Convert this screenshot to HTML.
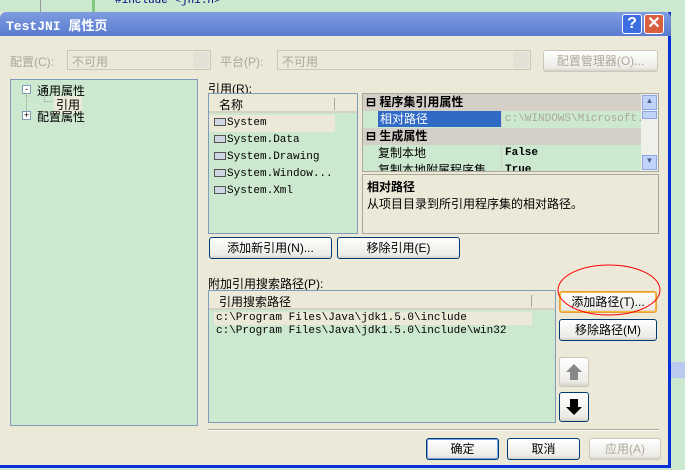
<!DOCTYPE html>
<html><head><meta charset="utf-8"><style>
*{margin:0;padding:0;box-sizing:border-box}
body{width:685px;height:470px;background:#cce8cf;position:relative;overflow:hidden;font-family:"Liberation Sans","Noto Sans CJK SC",sans-serif;font-size:12px;color:#000}
.a{position:absolute}
.dlg{left:0;top:12px;width:671px;height:456px;background:#ece9d8;border:3px solid #0831d9;border-top:none;border-left:none}
.title{left:0;top:12px;width:671px;height:24px;background:linear-gradient(#7f9ddf,#6c8bd8 50%,#5a7bd0);color:#fff;font-weight:bold;font-size:13px;padding:3px 0 0 6px;font-family:"Liberation Mono","Noto Sans CJK SC",monospace;border-radius:6px 6px 0 0}
.tb{top:14px;width:20px;height:20px;border:1px solid #fff;border-radius:3px;color:#fff;font-weight:bold;text-align:center;font-size:16px;line-height:18px}
.combo{height:20px;border:1px solid #c9c7ba;background:#ece9d8;color:#aca899;padding:2px 4px}
.combo:after{content:"";position:absolute;right:1px;top:1px;width:16px;height:16px;background:#e3e1d6}
.dis{color:#aca899}
.box{background:#cce8cf;border:1px solid #7f9db9}
.btn{height:22px;border:1px solid #003c74;border-radius:3px;background:linear-gradient(#fff,#ecebe6 85%,#d6d0c5);text-align:center;line-height:20px}
.mono{font-family:"Liberation Mono","Noto Sans CJK SC",monospace;font-size:11px}
.ref{left:4px;height:17px;line-height:17px}
.ic{display:inline-block;width:12px;height:8px;border:1px solid #555;background:#cfd6e4;vertical-align:-1px;margin-right:1px;margin-left:5px}
</style></head><body>
<div class="a" style="left:40px;top:0;width:55px;height:12px;border-left:1px solid #999;border-right:3px solid #7ec97e"></div>
<div class="a mono" style="left:115px;top:-5px;color:#000080">#include &lt;jni.h&gt;</div>
<div class="a dlg"></div>
<div class="a title">TestJNI 属性页</div>
<div class="a tb" style="left:622px;background:#3c6ee0">?</div>
<div class="a tb" style="left:644px;background:#d8603e">✕</div>
<div class="a" style="left:671px;top:362px;width:14px;height:16px;background:#b9c9ef"></div>

<div class="a dis" style="left:10px;top:53px">配置(C):</div>
<div class="a combo" style="left:67px;top:50px;width:144px">不可用</div>
<div class="a dis" style="left:220px;top:53px">平台(P):</div>
<div class="a combo" style="left:277px;top:50px;width:254px">不可用</div>
<div class="a btn dis" style="left:543px;top:50px;width:115px;border-color:#c9c7ba">配置管理器(O)...</div>

<div class="a box" style="left:10px;top:79px;width:188px;height:347px"></div>
<div class="a" style="left:22px;top:85px;width:9px;height:9px;border:1px solid #7f9db9;background:#fff;font-size:9px;line-height:6px;text-align:center">-</div>
<div class="a" style="left:37px;top:82px">通用属性</div>
<div class="a" style="left:54px;top:96px;background:#ece9d8;padding:0 2px">引用</div>
<div class="a" style="left:26px;top:95px;height:22px;border-left:1px dotted #999"></div>
<div class="a" style="left:44px;top:95px;width:8px;height:7px;border-left:1px dotted #999;border-bottom:1px dotted #999"></div>
<div class="a" style="left:22px;top:111px;width:9px;height:9px;border:1px solid #7f9db9;background:#fff;font-size:9px;line-height:7px;text-align:center">+</div>
<div class="a" style="left:37px;top:108px">配置属性</div>

<div class="a" style="left:208px;top:80px">引用(R):</div>
<div class="a box" style="left:208px;top:93px;width:150px;height:141px"></div>
<div class="a" style="left:209px;top:94px;width:148px;height:19px;background:#ece9d8;border-bottom:2px solid #d6d2c2;padding:2px 0 0 10px">名称</div>
<div class="a" style="left:334px;top:98px;height:12px;border-left:1px solid #aca899"></div>
<div class="a mono" style="left:209px;top:115px;width:140px">
<div class="ref a" style="top:0;left:0;width:126px;background:#ece9d8"><span class="ic"></span>System</div>
<div class="ref a" style="top:17px;left:0"><span class="ic"></span>System.Data</div>
<div class="ref a" style="top:34px;left:0"><span class="ic"></span>System.Drawing</div>
<div class="ref a" style="top:51px;left:0;white-space:nowrap"><span class="ic"></span>System.Window...</div>
<div class="ref a" style="top:68px;left:0"><span class="ic"></span>System.Xml</div>
</div>

<div class="a" style="left:362px;top:93px;width:297px;height:79px;border:1px solid #aca899;background:#cce8cf"></div>
<div class="a" style="left:363px;top:94px;width:278px;height:17px;background:#d4d0c8;font-weight:bold;padding:0 0 0 3px;line-height:17px">⊟ 程序集引用属性</div>
<div class="a" style="left:378px;top:111px;width:123px;height:16px;background:#316ac5;color:#fff;padding-left:2px;line-height:16px">相对路径</div>
<div class="a mono" style="left:505px;top:111px;color:#aca899;line-height:16px;width:136px;overflow:hidden;white-space:nowrap">c:\WINDOWS\Microsoft.NET</div>
<div class="a" style="left:363px;top:128px;width:278px;height:17px;background:#d4d0c8;font-weight:bold;padding-left:3px;line-height:17px">⊟ 生成属性</div>
<div class="a" style="left:378px;top:145px;line-height:17px">复制本地</div>
<div class="a mono" style="left:505px;top:145px;line-height:17px;font-weight:bold">False</div>
<div class="a" style="left:378px;top:162px;height:9px;overflow:hidden;line-height:17px;width:260px">复制本地附属程序集<span class="mono" style="position:absolute;left:127px;font-weight:bold">True</span></div>
<div class="a" style="left:501px;top:111px;height:60px;border-left:1px solid #d4d0c8"></div>
<div class="a" style="left:641px;top:94px;width:17px;height:77px;background:#f0f0ea"></div>
<div class="a" style="left:642px;top:95px;width:15px;height:15px;background:#c1d3fb;border:1px solid #8aa5e0;font-size:8px;text-align:center;color:#4d6185">▲</div>
<div class="a" style="left:642px;top:111px;width:15px;height:8px;background:#c1d3fb;border:1px solid #8aa5e0"></div>
<div class="a" style="left:642px;top:155px;width:15px;height:15px;background:#c1d3fb;border:1px solid #8aa5e0;font-size:8px;text-align:center;color:#4d6185">▼</div>
<div class="a" style="left:362px;top:174px;width:297px;height:60px;border:1px solid #aca899;padding:3px 4px">
<div style="font-weight:bold">相对路径</div><div>从项目目录到所引用程序集的相对路径。</div></div>

<div class="a btn" style="left:209px;top:237px;width:123px">添加新引用(N)...</div>
<div class="a btn" style="left:337px;top:237px;width:123px">移除引用(E)</div>

<div class="a" style="left:208px;top:275px">附加引用搜索路径(P):</div>
<div class="a box" style="left:208px;top:290px;width:348px;height:133px"></div>
<div class="a" style="left:209px;top:291px;width:346px;height:19px;background:#ece9d8;border-bottom:2px solid #d6d2c2;padding:2px 0 0 10px">引用搜索路径</div>
<div class="a" style="left:531px;top:295px;height:12px;border-left:1px solid #aca899"></div>
<div class="a mono" style="left:214px;top:312px;width:318px;height:13px;background:#ece9d8;line-height:13px;padding-left:2px">c:\Program Files\Java\jdk1.5.0\include</div>
<div class="a mono" style="left:216px;top:325px;line-height:13px">c:\Program Files\Java\jdk1.5.0\include\win32</div>

<div class="a btn" style="left:559px;top:291px;width:98px;border-color:#e5a03a;box-shadow:inset 0 0 0 1px #f8b83a">添加路径(T)...</div>
<div class="a btn" style="left:559px;top:319px;width:98px">移除路径(M)</div>
<div class="a btn" style="left:559px;top:357px;width:30px;height:30px;border-color:#c9c7ba"></div>
<div class="a btn" style="left:559px;top:392px;width:30px;height:30px"></div>
<svg class="a" style="left:559px;top:357px" width="30" height="65"><path d="M15 7 L23 15 H19 V23 H11 V15 H7 Z" fill="#888"/><path d="M11 42 H19 V50 H23 L15 58 L7 50 H11 Z" fill="#000"/></svg>

<div class="a" style="left:208px;top:429px;width:451px;border-top:1px solid #aca899;border-bottom:1px solid #fff"></div>
<div class="a btn" style="left:426px;top:438px;width:73px;box-shadow:inset 0 0 0 1px #7ba2e7">确定</div>
<div class="a btn" style="left:507px;top:438px;width:73px">取消</div>
<div class="a btn dis" style="left:589px;top:438px;width:72px;border-color:#c9c7ba">应用(A)</div>

<svg class="a" style="left:555px;top:260px" width="110" height="60"><ellipse cx="54" cy="30" rx="51" ry="25" fill="none" stroke="#f00" stroke-width="1"/></svg>
</body></html>
